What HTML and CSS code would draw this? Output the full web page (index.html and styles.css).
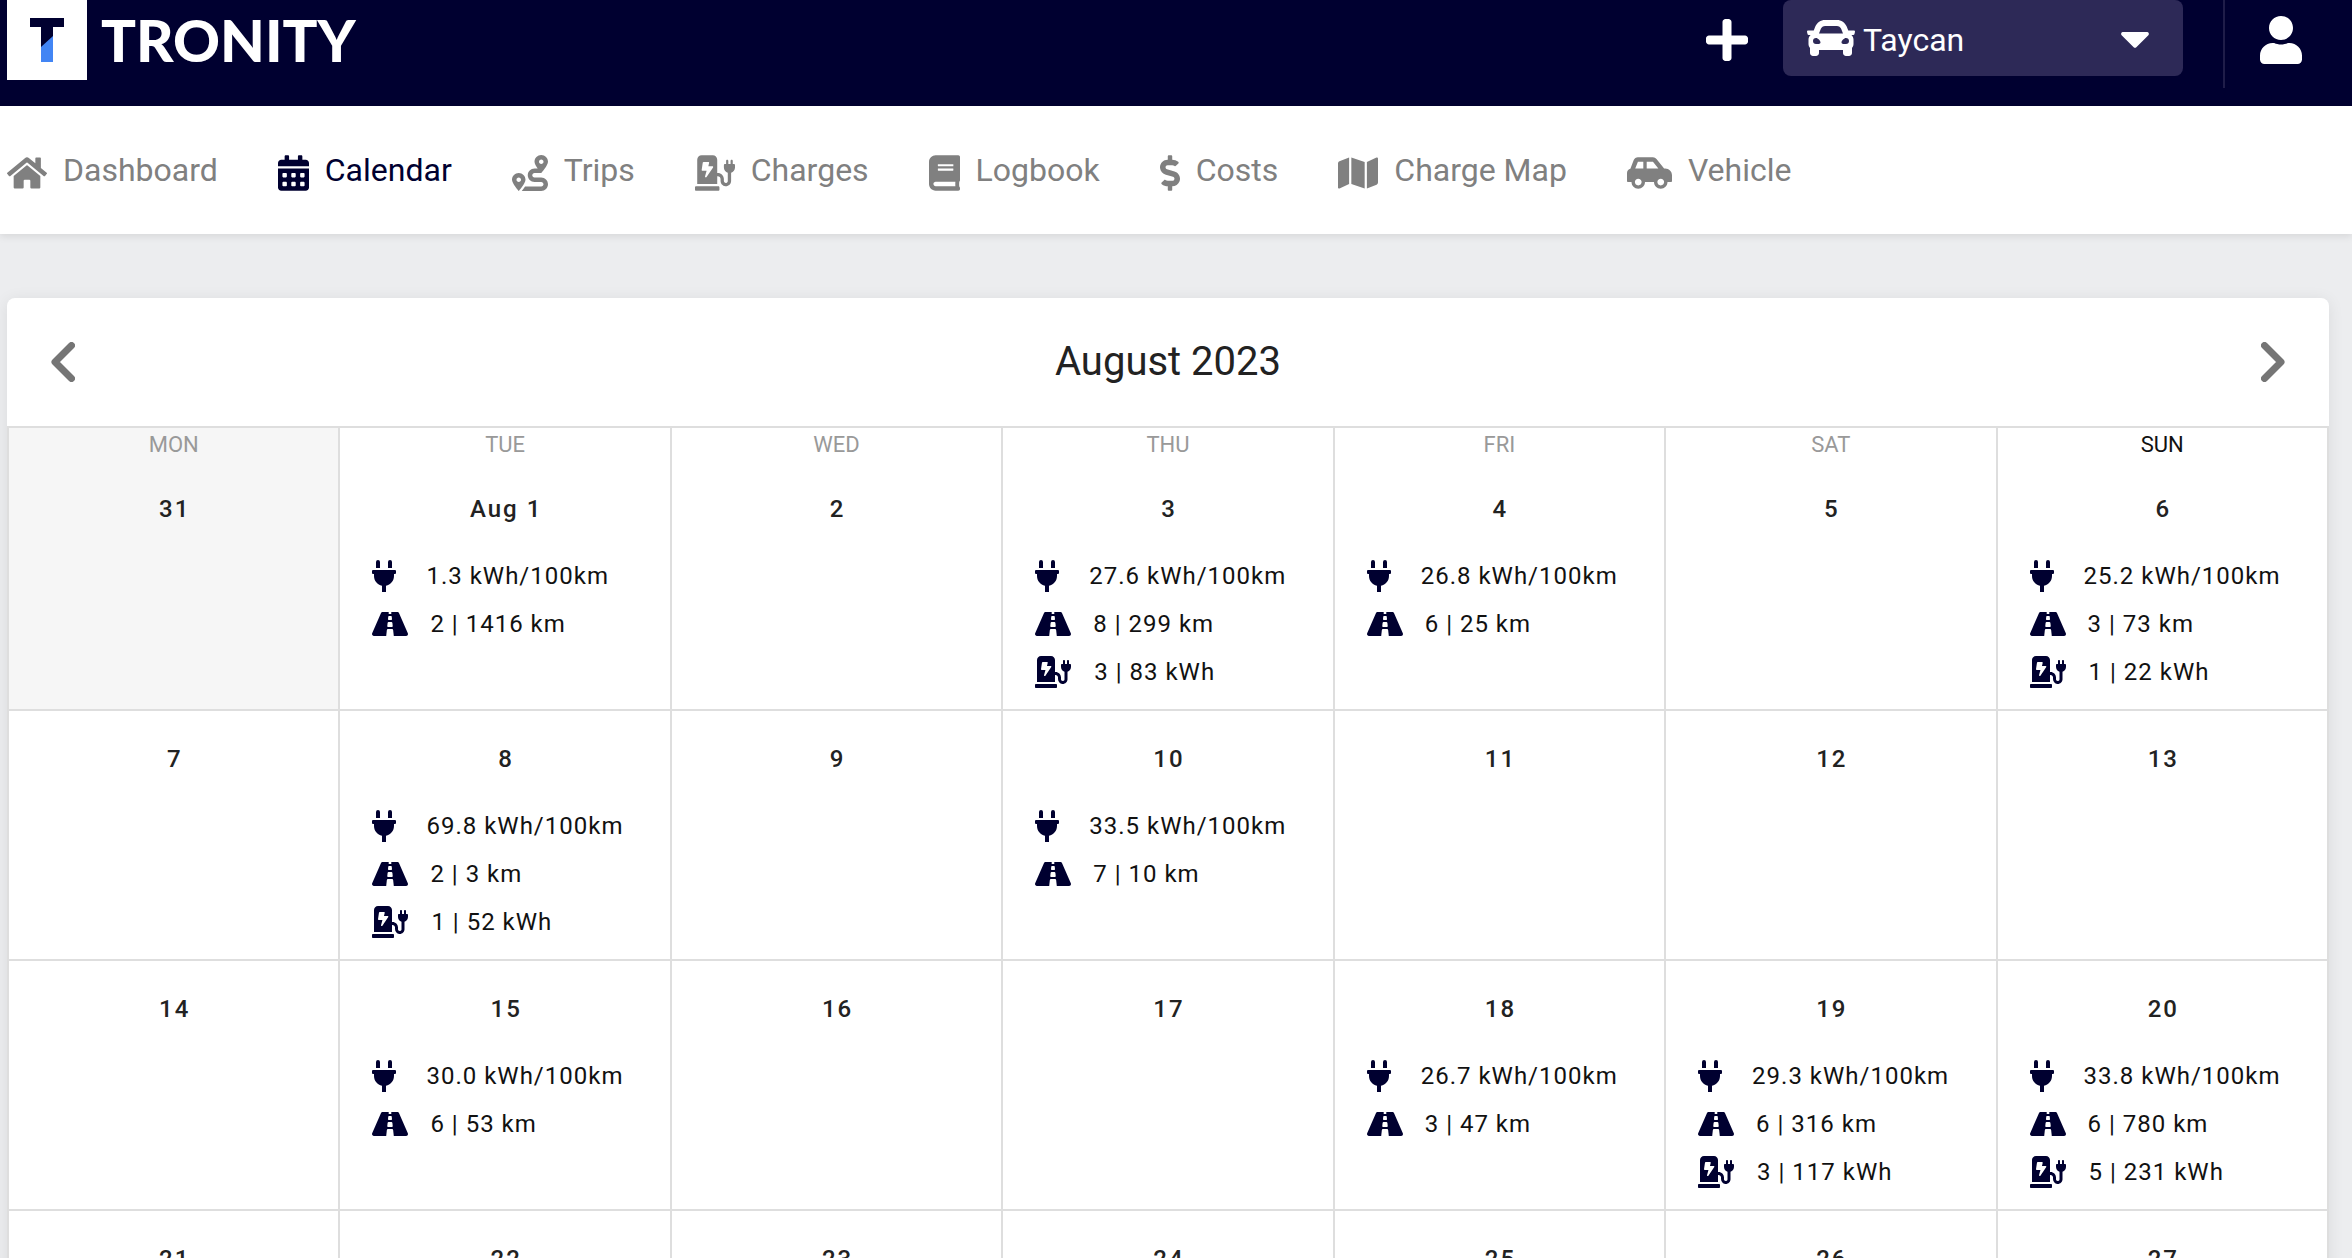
FILE: index.html
```html
<!DOCTYPE html>
<html lang="en">
<head>
<meta charset="utf-8">
<meta name="viewport" content="width=device-width, initial-scale=1">
<title>Tronity – Calendar</title>
<link rel="stylesheet" href="styles.css">
</head>
<body>
<svg class="sprite" aria-hidden="true">
  <symbol id="home" viewBox="0 0 576 512"><path d="M280.37 148.26L96 300.11V464a16 16 0 0 0 16 16l112.06-.29a16 16 0 0 0 15.92-16V368a16 16 0 0 1 16-16h64a16 16 0 0 1 16 16v95.64a16 16 0 0 0 16 16.05L464 480a16 16 0 0 0 16-16V300L295.67 148.26a12.19 12.19 0 0 0-15.3 0zM571.6 251.47L488 182.56V44.05a12 12 0 0 0-12-12h-56a12 12 0 0 0-12 12v72.61L318.47 43a48 48 0 0 0-61 0L4.34 251.47a12 12 0 0 0-1.6 16.9l25.5 31A12 12 0 0 0 45.15 301l235.22-193.74a12.19 12.19 0 0 1 15.3 0L530.9 301a12 12 0 0 0 16.9-1.6l25.5-31a12 12 0 0 0-1.7-16.93z"/></symbol>
  <symbol id="calendar" viewBox="0 0 448 512"><path d="M0 464c0 26.5 21.5 48 48 48h352c26.5 0 48-21.5 48-48V192H0v272zm320-196c0-6.6 5.4-12 12-12h40c6.6 0 12 5.4 12 12v40c0 6.6-5.4 12-12 12h-40c-6.6 0-12-5.4-12-12v-40zm0 128c0-6.6 5.4-12 12-12h40c6.6 0 12 5.4 12 12v40c0 6.6-5.4 12-12 12h-40c-6.6 0-12-5.4-12-12v-40zM192 268c0-6.6 5.4-12 12-12h40c6.6 0 12 5.4 12 12v40c0 6.6-5.4 12-12 12h-40c-6.6 0-12-5.4-12-12v-40zm0 128c0-6.6 5.4-12 12-12h40c6.6 0 12 5.4 12 12v40c0 6.6-5.4 12-12 12h-40c-6.6 0-12-5.4-12-12v-40zM64 268c0-6.6 5.4-12 12-12h40c6.6 0 12 5.4 12 12v40c0 6.6-5.4 12-12 12H76c-6.6 0-12-5.4-12-12v-40zm0 128c0-6.6 5.4-12 12-12h40c6.6 0 12 5.4 12 12v40c0 6.6-5.4 12-12 12H76c-6.6 0-12-5.4-12-12v-40zM400 64h-48V16c0-8.8-7.2-16-16-16h-32c-8.8 0-16 7.2-16 16v48H160V16c0-8.8-7.2-16-16-16h-32c-8.8 0-16 7.2-16 16v48H48C21.5 64 0 85.5 0 112v48h448v-48c0-26.5-21.5-48-48-48z"/></symbol>
  <symbol id="route" viewBox="0 0 512 512"><path d="M416 320h-96c-17.6 0-32-14.4-32-32s14.4-32 32-32h96s96-107 96-160-43-96-96-96-96 43-96 96c0 25.5 22.2 63.4 45.3 96H320c-52.9 0-96 43.1-96 96s43.1 96 96 96h96c17.6 0 32 14.4 32 32s-14.4 32-32 32H185.5c-16 24.8-33.8 47.7-47.3 64H416c52.9 0 96-43.1 96-96s-43.1-96-96-96zm0-256c17.7 0 32 14.3 32 32s-14.3 32-32 32-32-14.3-32-32 14.3-32 32-32zM96 256c-53 0-96 43-96 96s96 160 96 160 96-107 96-160-43-96-96-96zm0 128c-17.7 0-32-14.3-32-32s14.3-32 32-32 32 14.3 32 32-14.3 32-32 32z"/></symbol>
  <symbol id="station" viewBox="0 0 576 512"><path d="M336 448H16c-8.84 0-16 7.16-16 16v32c0 8.84 7.16 16 16 16h320c8.84 0 16-7.16 16-16v-32c0-8.84-7.16-16-16-16zm208-320V80c0-8.84-7.16-16-16-16s-16 7.16-16 16v48h-32V80c0-8.84-7.16-16-16-16s-16 7.16-16 16v48h-16c-8.84 0-16 7.16-16 16v32c0 35.76 23.62 65.69 56 75.93v118.49c0 13.95-9.5 26.92-23.26 29.19C431.22 402.5 416 388.99 416 372v-28c0-48.6-39.4-88-88-88h-8V64c0-35.35-28.65-64-64-64H96C60.65 0 32 28.65 32 64v352h288V304h8c22.09 0 40 17.91 40 40v24.61c0 39.67 28.92 75.16 68.41 79.01C481.71 452.05 520 416.41 520 372V251.93c32.38-10.24 56-40.17 56-75.93v-32c0-8.84-7.16-16-16-16h-16zm-283.91 47.76l-93.7 139c-2.2 3.33-6.21 5.24-10.39 5.24-7.67 0-13.47-6.28-11.67-12.92L167.35 224H108c-7.25 0-12.85-5.59-11.89-11.89l16-107C112.9 99.9 117.98 96 124 96h68c7.88 0 13.62 6.54 11.6 13.21L192 160h57.7c9.24 0 15.01 8.78 10.39 15.76z"/></symbol>
  <symbol id="book" viewBox="0 0 448 512"><path d="M448 360V24c0-13.3-10.7-24-24-24H96C43 0 0 43 0 96v320c0 53 43 96 96 96h328c13.3 0 24-10.7 24-24v-16c0-7.5-3.5-14.3-8.9-18.7-4.2-15.4-4.2-59.3 0-74.7 5.4-4.3 8.9-11.1 8.9-18.6zM128 134c0-3.3 2.7-6 6-6h212c3.3 0 6 2.7 6 6v20c0 3.3-2.7 6-6 6H134c-3.3 0-6-2.7-6-6v-20zm0 64c0-3.3 2.7-6 6-6h212c3.3 0 6 2.7 6 6v20c0 3.3-2.7 6-6 6H134c-3.3 0-6-2.7-6-6v-20zm253.4 250H96c-17.7 0-32-14.3-32-32 0-17.6 14.4-32 32-32h285.4c-1.9 17.1-1.9 46.9 0 64z"/></symbol>
  <symbol id="dollar" viewBox="0 0 288 512"><path d="M209.2 233.4l-108-31.6C88.7 198.2 80 186.5 80 173.5c0-16.3 13.2-29.5 29.5-29.5h66.3c12.2 0 24.2 3.7 34.2 10.5 6.1 4.1 14.3 3.1 19.5-2l34.8-34c7.1-6.9 6.1-18.4-1.8-24.5C238 74.8 207.4 64.1 176 64V16c0-8.8-7.2-16-16-16h-32c-8.8 0-16 7.2-16 16v48h-2.5C45.8 64-5.4 118.7.5 183.6c4.2 46.1 39.4 83.6 83.8 96.6l102.5 30c12.5 3.7 21.2 15.3 21.2 28.3 0 16.3-13.2 29.5-29.5 29.5h-66.3C100 368 88 364.3 78 357.5c-6.1-4.1-14.3-3.1-19.5 2l-34.8 34c-7.1 6.9-6.1 18.4 1.8 24.5 24.5 19.2 55.1 29.9 86.5 30v48c0 8.8 7.2 16 16 16h32c8.8 0 16-7.2 16-16v-48.2c46.6-.9 90.3-28.6 105.7-72.7 21.5-61.6-14.6-124.8-72.5-141.7z"/></symbol>
  <symbol id="map" viewBox="0 0 576 512"><path d="M0 117.66v346.32c0 11.32 11.43 19.06 21.94 14.86L160 416V32L20.12 87.95A32.006 32.006 0 0 0 0 117.66zM192 416l192 64V96L192 32v384zM554.06 33.16L416 96v384l139.88-55.95A31.996 31.996 0 0 0 576 394.34V48.02c0-11.32-11.43-19.06-21.94-14.86z"/></symbol>
  <symbol id="car-side" viewBox="0 0 640 512"><path d="M544 192h-16L419.22 56.02A64.025 64.025 0 0 0 369.24 32H155.33c-26.17 0-49.7 15.93-59.42 40.23L48 194.26C20.44 201.4 0 226.21 0 256v112c0 8.84 7.16 16 16 16h48c0 53.02 42.98 96 96 96s96-42.98 96-96h128c0 53.02 42.98 96 96 96s96-42.98 96-96h48c8.84 0 16-7.16 16-16v-80c0-53.02-42.98-96-96-96zM160 432c-26.47 0-48-21.53-48-48s21.53-48 48-48 48 21.53 48 48-21.53 48-48 48zm72-240H116.93l38.4-96H232v96zm48 0V96h89.24l76.8 96H280zm200 240c-26.47 0-48-21.53-48-48s21.53-48 48-48 48 21.53 48 48-21.53 48-48 48z"/></symbol>
  <symbol id="plus" viewBox="0 0 448 512"><path d="M416 208H272V64c0-17.67-14.33-32-32-32h-32c-17.67 0-32 14.33-32 32v144H32c-17.67 0-32 14.33-32 32v32c0 17.67 14.33 32 32 32h144v144c0 17.67 14.33 32 32 32h32c17.67 0 32-14.33 32-32V304h144c17.67 0 32-14.33 32-32v-32c0-17.67-14.33-32-32-32z"/></symbol>
  <symbol id="car" viewBox="0 0 512 512"><path d="M499.99 176h-59.87l-16.64-41.6C406.38 91.63 365.57 64 319.5 64h-127c-46.06 0-86.88 27.63-103.99 70.4L71.87 176H12.01C4.2 176-1.53 183.34.37 190.91l6 24C7.7 220.25 12.5 224 18.01 224h20.07C24.65 235.73 16 252.78 16 272v48c0 16.12 6.16 30.67 16 41.93V416c0 17.67 14.33 32 32 32h32c17.67 0 32-14.33 32-32v-32h256v32c0 17.67 14.33 32 32 32h32c17.67 0 32-14.33 32-32v-54.07c9.84-11.25 16-25.8 16-41.93v-48c0-19.22-8.65-36.27-22.07-48H494c5.51 0 10.31-3.75 11.64-9.09l6-24c1.89-7.57-3.84-14.91-11.65-14.91zm-352.06-17.83c7.29-18.22 24.94-30.17 44.57-30.17h127c19.63 0 37.28 11.95 44.57 30.17L384 208H128l19.93-49.83zM96 319.8c-19.2 0-32-12.76-32-31.9S76.8 256 96 256s48 28.71 48 47.85-28.8 15.95-48 15.95zm320 0c-19.2 0-48 3.19-48-15.95S396.8 256 416 256s32 12.76 32 31.9-12.8 31.9-32 31.9z"/></symbol>
  <symbol id="caret" viewBox="0 0 320 512"><path d="M31.3 192h257.3c17.8 0 26.7 21.5 14.1 34.1L174.1 354.8c-7.8 7.8-20.5 7.8-28.3 0L17.2 226.1C4.6 213.5 13.5 192 31.3 192z"/></symbol>
  <symbol id="user" viewBox="0 0 448 512"><path d="M224 256c70.7 0 128-57.3 128-128S294.7 0 224 0 96 57.3 96 128s57.3 128 128 128zm89.6 32h-16.7c-22.2 10.2-46.9 16-72.9 16s-50.6-5.8-72.9-16h-16.7C60.2 288 0 348.2 0 422.4V464c0 26.5 21.5 48 48 48h352c26.5 0 48-21.5 48-48v-41.6c0-74.2-60.2-134.4-134.4-134.4z"/></symbol>
  <symbol id="plug" viewBox="0 0 384 512"><path d="M320 32a32 32 0 0 0-64 0v96h64zm48 128H16A16 16 0 0 0 0 176v32a16 16 0 0 0 16 16h16v32c0 77.4 55 142 128 156.8V512h64v-99.2c73-14.8 128-79.4 128-156.8v-32h16a16 16 0 0 0 16-16v-32a16 16 0 0 0-16-16zM128 32a32 32 0 0 0-64 0v96h64z"/></symbol>
  <symbol id="road" viewBox="0 0 576 512"><path d="M573.19 402.67l-139.79-320C428.43 71.29 417.6 64 405.68 64h-97.59l2.45 23.16c.5 4.72-3.21 8.84-7.96 8.84h-29.16c-4.75 0-8.46-4.12-7.96-8.84L267.91 64h-97.59c-11.93 0-22.76 7.29-27.73 18.67L2.8 402.67C-6.45 423.86 8.31 448 30.54 448h196.84l10.31-97.68c.86-8.14 7.72-14.32 15.91-14.32h68.8c8.19 0 15.05 6.18 15.91 14.32L348.62 448h196.84c22.23 0 36.99-24.14 27.73-45.33zM260.4 135.16a8 8 0 0 1 7.96-7.16h39.29c4.09 0 7.53 3.09 7.96 7.16l4.6 43.58c.75 7.09-4.81 13.26-11.93 13.26h-40.54c-7.13 0-12.68-6.17-11.93-13.26l4.59-43.58zM315.64 304h-55.29c-9.5 0-16.91-8.23-15.91-17.68l5.07-48c.86-8.14 7.72-14.32 15.91-14.32h45.15c8.19 0 15.05 6.18 15.91 14.32l5.07 48c1 9.45-6.41 17.68-15.91 17.68z"/></symbol>
  <symbol id="chevron-left" viewBox="0 0 24 40"><path d="M20.500 3.500L4 20l16.500 16.500" fill="none" stroke="currentColor" stroke-width="7" stroke-linecap="round" stroke-linejoin="round"/></symbol>
  <symbol id="chevron-right" viewBox="0 0 24 40"><path d="M3.500 3.500L20 20L3.500 36.500" fill="none" stroke="currentColor" stroke-width="7" stroke-linecap="round" stroke-linejoin="round"/></symbol>
</svg>

<header class="topbar">
  <a class="brand" href="#">
    <svg class="brand-mark" viewBox="0 0 80 80" aria-hidden="true">
      <path d="M0 0h80v80H0z" fill="#fff"/>
      <path d="M23 18h34v9H46v35H34V27H23z" fill="#000030"/>
      <path d="M34 47L46 36v26H34z" fill="#4285f4"/>
    </svg>
    <span class="brand-name">TRONITY</span>
  </a>
  <div class="actions">
    <button class="icon-button" type="button" aria-label="Add vehicle"><svg class="icon-lg"><use href="#plus"/></svg></button>
    <div class="picker">
      <svg class="picker-car" aria-hidden="true"><use href="#car"/></svg>
      <select class="picker-select" aria-label="Vehicle"><option>Taycan</option></select>
      <svg class="picker-caret" aria-hidden="true"><use href="#caret"/></svg>
    </div>
    <div class="divider"></div>
    <button class="icon-button" type="button" aria-label="Account"><svg class="icon-lg"><use href="#user"/></svg></button>
  </div>
</header>

<nav class="nav">
  <a class="nav-link" href="#"><svg class="nav-icon nav-icon-wide"><use href="#home"/></svg>Dashboard</a>
  <a class="nav-link nav-link-active" href="#" aria-current="page"><svg class="nav-icon nav-icon-slim"><use href="#calendar"/></svg>Calendar</a>
  <a class="nav-link" href="#"><svg class="nav-icon"><use href="#route"/></svg>Trips</a>
  <a class="nav-link" href="#"><svg class="nav-icon nav-icon-wide"><use href="#station"/></svg>Charges</a>
  <a class="nav-link" href="#"><svg class="nav-icon nav-icon-slim"><use href="#book"/></svg>Logbook</a>
  <a class="nav-link" href="#"><svg class="nav-icon nav-icon-narrow"><use href="#dollar"/></svg>Costs</a>
  <a class="nav-link" href="#"><svg class="nav-icon nav-icon-wide"><use href="#map"/></svg>Charge Map</a>
  <a class="nav-link" href="#"><svg class="nav-icon nav-icon-wider"><use href="#car-side"/></svg>Vehicle</a>
</nav>

<main class="page">
  <section class="card">
    <div class="card-head">
      <button class="step" type="button" aria-label="Previous month"><svg class="chevron"><use href="#chevron-left"/></svg></button>
      <h1 class="title">August 2023</h1>
      <button class="step" type="button" aria-label="Next month"><svg class="chevron"><use href="#chevron-right"/></svg></button>
    </div>
    <table class="calendar">
      <thead>
        <tr>
          <th class="weekday outside">MON</th><th class="weekday">TUE</th><th class="weekday">WED</th><th class="weekday">THU</th><th class="weekday">FRI</th><th class="weekday">SAT</th><th class="weekday weekday-today">SUN</th>
        </tr>
      </thead>
      <tbody>
        <tr>
          <td class="day outside"><div class="date">31</div></td>
          <td class="day"><div class="date">Aug 1</div>
            <ul class="stats">
              <li class="stat"><svg class="plug"><use href="#plug"/></svg>1.3 kWh/100km</li>
              <li class="stat"><svg class="road"><use href="#road"/></svg>2 | 1416 km</li>
            </ul></td>
          <td class="day"><div class="date">2</div></td>
          <td class="day"><div class="date">3</div>
            <ul class="stats">
              <li class="stat"><svg class="plug"><use href="#plug"/></svg>27.6 kWh/100km</li>
              <li class="stat"><svg class="road"><use href="#road"/></svg>8 | 299 km</li>
              <li class="stat"><svg class="station"><use href="#station"/></svg>3 | 83 kWh</li>
            </ul></td>
          <td class="day"><div class="date">4</div>
            <ul class="stats">
              <li class="stat"><svg class="plug"><use href="#plug"/></svg>26.8 kWh/100km</li>
              <li class="stat"><svg class="road"><use href="#road"/></svg>6 | 25 km</li>
            </ul></td>
          <td class="day"><div class="date">5</div></td>
          <td class="day"><div class="date">6</div>
            <ul class="stats">
              <li class="stat"><svg class="plug"><use href="#plug"/></svg>25.2 kWh/100km</li>
              <li class="stat"><svg class="road"><use href="#road"/></svg>3 | 73 km</li>
              <li class="stat"><svg class="station"><use href="#station"/></svg>1 | 22 kWh</li>
            </ul></td>
        </tr>
        <tr>
          <td class="day"><div class="date">7</div></td>
          <td class="day"><div class="date">8</div>
            <ul class="stats">
              <li class="stat"><svg class="plug"><use href="#plug"/></svg>69.8 kWh/100km</li>
              <li class="stat"><svg class="road"><use href="#road"/></svg>2 | 3 km</li>
              <li class="stat"><svg class="station"><use href="#station"/></svg>1 | 52 kWh</li>
            </ul></td>
          <td class="day"><div class="date">9</div></td>
          <td class="day"><div class="date">10</div>
            <ul class="stats">
              <li class="stat"><svg class="plug"><use href="#plug"/></svg>33.5 kWh/100km</li>
              <li class="stat"><svg class="road"><use href="#road"/></svg>7 | 10 km</li>
            </ul></td>
          <td class="day"><div class="date">11</div></td>
          <td class="day"><div class="date">12</div></td>
          <td class="day"><div class="date">13</div></td>
        </tr>
        <tr>
          <td class="day"><div class="date">14</div></td>
          <td class="day"><div class="date">15</div>
            <ul class="stats">
              <li class="stat"><svg class="plug"><use href="#plug"/></svg>30.0 kWh/100km</li>
              <li class="stat"><svg class="road"><use href="#road"/></svg>6 | 53 km</li>
            </ul></td>
          <td class="day"><div class="date">16</div></td>
          <td class="day"><div class="date">17</div></td>
          <td class="day"><div class="date">18</div>
            <ul class="stats">
              <li class="stat"><svg class="plug"><use href="#plug"/></svg>26.7 kWh/100km</li>
              <li class="stat"><svg class="road"><use href="#road"/></svg>3 | 47 km</li>
            </ul></td>
          <td class="day"><div class="date">19</div>
            <ul class="stats">
              <li class="stat"><svg class="plug"><use href="#plug"/></svg>29.3 kWh/100km</li>
              <li class="stat"><svg class="road"><use href="#road"/></svg>6 | 316 km</li>
              <li class="stat"><svg class="station"><use href="#station"/></svg>3 | 117 kWh</li>
            </ul></td>
          <td class="day"><div class="date">20</div>
            <ul class="stats">
              <li class="stat"><svg class="plug"><use href="#plug"/></svg>33.8 kWh/100km</li>
              <li class="stat"><svg class="road"><use href="#road"/></svg>6 | 780 km</li>
              <li class="stat"><svg class="station"><use href="#station"/></svg>5 | 231 kWh</li>
            </ul></td>
        </tr>
        <tr>
          <td class="day"><div class="date">21</div></td>
          <td class="day"><div class="date">22</div></td>
          <td class="day"><div class="date">23</div></td>
          <td class="day"><div class="date">24</div></td>
          <td class="day"><div class="date">25</div></td>
          <td class="day"><div class="date">26</div></td>
          <td class="day"><div class="date">27</div></td>
        </tr>
      </tbody>
    </table>
  </section>
</main>
</body>
</html>
```

FILE: styles.css
```css
* {
  box-sizing: border-box;
}

html {
  scrollbar-width: none;
}

body {
  margin: 0;
  background: #ecedef;
  color: #111;
  font-family: Roboto, "Liberation Sans", sans-serif;
  font-size: 24px;
}

svg {
  display: block;
  flex: none;
  fill: currentColor;
}

button {
  padding: 0;
  border: 0;
  background: none;
  color: inherit;
  font: inherit;
  cursor: pointer;
}

.sprite {
  position: absolute;
  width: 0;
  height: 0;
}

/* Top bar */
.topbar {
  display: flex;
  align-items: flex-start;
  justify-content: space-between;
  padding: 0 50px 18px 7px;
  background: #000030;
  color: #fff;
}

.brand {
  display: flex;
  align-items: center;
  gap: 14px;
  height: 80px;
  color: #fff;
  text-decoration: none;
}

.brand-mark {
  width: 80px;
  height: 80px;
}

.brand-name {
  font-family: Lato, sans-serif;
  font-size: 58px;
  font-weight: 900;
  line-height: 78px;
}

.actions {
  display: flex;
  align-items: flex-start;
}

.icon-button {
  height: 80px;
}

.icon-lg {
  width: 42px;
  height: 48px;
}

.picker {
  display: flex;
  align-items: center;
  width: 400px;
  height: 76px;
  margin: 0 40px 0 35px;
  padding: 0 33px 0 24px;
  border-radius: 8px;
  background: #2d2957;
}

.picker-car {
  width: 48px;
  height: 48px;
}

.picker-select {
  flex: 1;
  height: 76px;
  padding: 4px 8px 0;
  border: 0;
  background: transparent;
  color: #fff;
  font: inherit;
  font-size: 32px;
  appearance: none;
}

.picker-caret {
  width: 30px;
  height: 48px;
}

.divider {
  width: 2px;
  height: 88px;
  margin-right: 35px;
  background: #1f1d49;
}

/* Navigation */
.nav {
  display: flex;
  align-items: center;
  gap: 60px;
  height: 128px;
  padding: 0 7px;
  background: #fff;
  box-shadow: 0 2px 8px rgba(0, 0, 0, 0.1);
}

.nav-link {
  display: flex;
  align-items: center;
  gap: 16px;
  color: #808080;
  font-size: 32px;
  line-height: 40px;
  white-space: nowrap;
  text-decoration: none;
}

.nav-link-active {
  color: #000030;
}

.nav-icon {
  width: 36px;
  height: 36px;
  margin-top: 6px;
}

.nav-icon-narrow {
  width: 20px;
}

.nav-icon-slim {
  width: 31px;
}

.nav-icon-wide {
  width: 40px;
}

.nav-icon-wider {
  width: 45px;
}

/* Calendar card */
.page {
  padding: 64px 23px 64px 7px;
}

.card {
  border-radius: 8px 8px 0 0;
  background: #fff;
  box-shadow: 0 2px 16px rgba(0, 0, 30, 0.08);
}

.card-head {
  display: flex;
  align-items: center;
  justify-content: space-between;
  height: 128px;
  padding: 0 44px;
}

.step {
  color: #757575;
}

.chevron {
  width: 24px;
  height: 40px;
}

.title {
  margin: 0;
  padding-bottom: 2px;
  color: #222;
  font-size: 40px;
  font-weight: 400;
}

.calendar {
  width: 100%;
  border-right: 2px solid #dedede;
  border-collapse: separate;
  border-spacing: 0;
  table-layout: fixed;
}

.weekday {
  height: 35px;
  padding: 0;
  border-top: 2px solid #dedede;
  border-left: 2px solid #dedede;
  color: #999;
  font-size: 22px;
  font-weight: 400;
  line-height: 33px;
}

.weekday-today {
  color: #111;
}

.day {
  height: 250px;
  padding: 32px 0 0;
  border-bottom: 2px solid #dedede;
  border-left: 2px solid #dedede;
  vertical-align: top;
}

.outside {
  background: #f6f6f6;
}

.date {
  padding-left: 2px;
  color: #222;
  font-weight: 500;
  letter-spacing: 2px;
  line-height: 32px;
  text-align: center;
}

.stats {
  margin: 27px 0 0;
  padding: 0 0 0 32px;
  list-style: none;
}

.stat {
  display: flex;
  align-items: center;
  height: 48px;
  letter-spacing: 1px;
  white-space: nowrap;
}

.plug,
.road,
.station {
  height: 32px;
  color: #000030;
}

.plug {
  width: 24px;
  margin-right: 30px;
}

.road {
  width: 36px;
  margin-right: 22px;
}

.station {
  width: 36px;
  margin-right: 23px;
}
```
